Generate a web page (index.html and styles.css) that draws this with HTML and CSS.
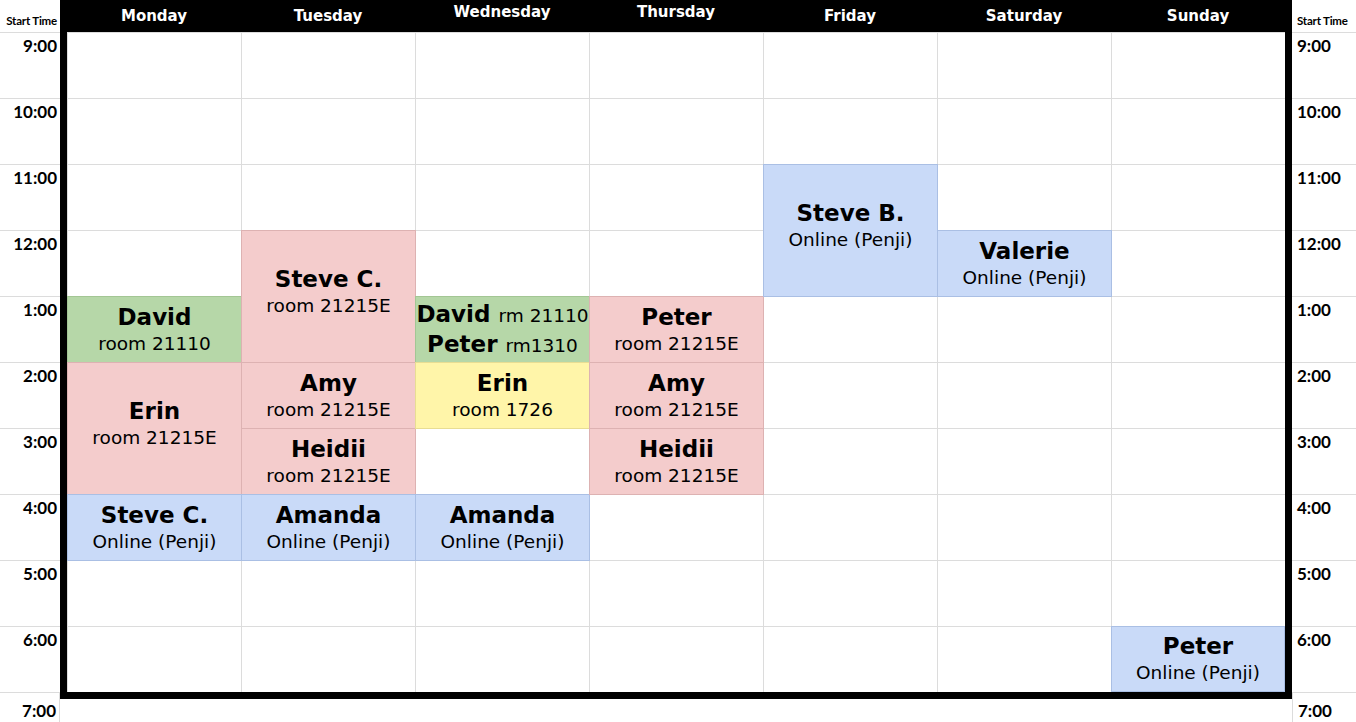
FILE: index.html
```html
<!DOCTYPE html>
<html lang="en">
<head>
    <meta charset="UTF-8">
    <meta name="viewport" content="width=device-width, initial-scale=1.0">
    <title>Tutoring Schedule</title>
    <link rel="stylesheet" href="styles.css">
</head>
<body>
    <div class="sheet">
        <div class="times times-left">
            <div class="time-head">Start Time</div>
            <div class="time">9:00</div>
            <div class="time">10:00</div>
            <div class="time">11:00</div>
            <div class="time">12:00</div>
            <div class="time">1:00</div>
            <div class="time">2:00</div>
            <div class="time">3:00</div>
            <div class="time">4:00</div>
            <div class="time">5:00</div>
            <div class="time">6:00</div>
            <div class="time time-last">7:00</div>
        </div>

        <div class="board">
            <div class="day-head">
                <div class="day">Monday</div>
                <div class="day">Tuesday</div>
                <div class="day day-up">Wednesday</div>
                <div class="day day-up">Thursday</div>
                <div class="day">Friday</div>
                <div class="day">Saturday</div>
                <div class="day">Sunday</div>
            </div>

            <div class="grid">
                <!-- Monday -->
                <div class="block green" style="grid-column: 1; grid-row: 5;">
                    <div class="name">David</div>
                    <div class="place">room 21110</div>
                </div>
                <div class="block pink tall" style="grid-column: 1; grid-row: 6 / span 2;">
                    <div class="name">Erin</div>
                    <div class="place">room 21215E</div>
                </div>
                <div class="block blue" style="grid-column: 1; grid-row: 8;">
                    <div class="name">Steve C.</div>
                    <div class="place">Online (Penji)</div>
                </div>

                <!-- Tuesday -->
                <div class="block pink tall" style="grid-column: 2; grid-row: 4 / span 2;">
                    <div class="name">Steve C.</div>
                    <div class="place">room 21215E</div>
                </div>
                <div class="block pink" style="grid-column: 2; grid-row: 6;">
                    <div class="name">Amy</div>
                    <div class="place">room 21215E</div>
                </div>
                <div class="block pink" style="grid-column: 2; grid-row: 7;">
                    <div class="name">Heidii</div>
                    <div class="place">room 21215E</div>
                </div>
                <div class="block blue" style="grid-column: 2; grid-row: 8;">
                    <div class="name">Amanda</div>
                    <div class="place">Online (Penji)</div>
                </div>

                <!-- Wednesday -->
                <div class="block green" style="grid-column: 3; grid-row: 5;">
                    <div class="name">David <span class="place-inline">rm 21110</span></div>
                    <div class="name">Peter <span class="place-inline">rm1310</span></div>
                </div>
                <div class="block yellow" style="grid-column: 3; grid-row: 6;">
                    <div class="name">Erin</div>
                    <div class="place">room 1726</div>
                </div>
                <div class="block blue" style="grid-column: 3; grid-row: 8;">
                    <div class="name">Amanda</div>
                    <div class="place">Online (Penji)</div>
                </div>

                <!-- Thursday -->
                <div class="block pink" style="grid-column: 4; grid-row: 5;">
                    <div class="name">Peter</div>
                    <div class="place">room 21215E</div>
                </div>
                <div class="block pink" style="grid-column: 4; grid-row: 6;">
                    <div class="name">Amy</div>
                    <div class="place">room 21215E</div>
                </div>
                <div class="block pink" style="grid-column: 4; grid-row: 7;">
                    <div class="name">Heidii</div>
                    <div class="place">room 21215E</div>
                </div>

                <!-- Friday -->
                <div class="block blue tall" style="grid-column: 5; grid-row: 3 / span 2;">
                    <div class="name">Steve B.</div>
                    <div class="place">Online (Penji)</div>
                </div>

                <!-- Saturday -->
                <div class="block blue" style="grid-column: 6; grid-row: 4;">
                    <div class="name">Valerie</div>
                    <div class="place">Online (Penji)</div>
                </div>

                <!-- Sunday -->
                <div class="block blue edge" style="grid-column: 7; grid-row: 10;">
                    <div class="name">Peter</div>
                    <div class="place">Online (Penji)</div>
                </div>
            </div>
        </div>

        <div class="times times-right">
            <div class="time-head">Start Time</div>
            <div class="time">9:00</div>
            <div class="time">10:00</div>
            <div class="time">11:00</div>
            <div class="time">12:00</div>
            <div class="time">1:00</div>
            <div class="time">2:00</div>
            <div class="time">3:00</div>
            <div class="time">4:00</div>
            <div class="time">5:00</div>
            <div class="time">6:00</div>
            <div class="time time-last">7:00</div>
        </div>
    </div>
</body>
</html>
```

FILE: styles.css
```css
* {
    margin: 0;
    padding: 0;
    box-sizing: border-box;
}

body {
    font-family: 'DejaVu Sans', Verdana, sans-serif;
    background: #fff;
    color: #000;
    width: 1356px;
    height: 722px;
    overflow: hidden;
}

.sheet {
    display: grid;
    grid-template-columns: 60px 1232px 64px;
    height: 722px;
}

/* start time columns */
.times {
    display: flex;
    flex-direction: column;
    font-family: 'Lato', 'DejaVu Sans', sans-serif;
    font-weight: 700;
}

.time-head {
    height: 32px;
    font-size: 11.5px;
    padding-top: 14px;
    letter-spacing: -0.2px;
}

.time {
    height: 66px;
    border-top: 1px solid #dcdcdc;
    font-size: 17px;
    padding-top: 2px;
}

.time-last {
    flex: 1;
    padding-top: 7px;
}

.times-left {
    text-align: right;
}

.times-left .time-head,
.times-left .time {
    padding-right: 3px;
}

.times-left .time-last {
    border-right: 1px solid #dcdcdc;
}

.times-right .time-head,
.times-right .time {
    padding-left: 5px;
}

.times-right .time-last {
    border-left: 1px solid #dcdcdc;
}

/* day board */
.board {
    display: flex;
    flex-direction: column;
}

.day-head {
    height: 32px;
    background: #000;
    padding: 0 7px;
    display: grid;
    grid-template-columns: repeat(7, 174px);
}

.day {
    color: #fff;
    font-weight: bold;
    font-size: 15px;
    display: flex;
    align-items: center;
    justify-content: center;
}

.day-up {
    align-items: flex-start;
    padding-top: 3px;
}

.grid {
    display: grid;
    grid-template-columns: repeat(7, 174px);
    grid-template-rows: repeat(10, 66px);
    border: 7px solid #000;
    border-top: 0;
    background-color: #fff;
    background-image:
        linear-gradient(to right, #dcdcdc 1px, transparent 1px),
        linear-gradient(to bottom, #dcdcdc 1px, transparent 1px);
    background-size: 174px 66px;
}

.block {
    display: flex;
    flex-direction: column;
    align-items: center;
    justify-content: center;
    border: 1px solid;
    margin-right: -1px;
    margin-bottom: -1px;
    text-align: center;
    white-space: nowrap;
}

.block.tall {
    padding-bottom: 10px;
}

.block.edge {
    margin: 0;
}

.name {
    font-weight: bold;
    font-size: 23px;
    line-height: 28px;
}

.place {
    font-size: 18.5px;
    line-height: 26px;
}

.place-inline {
    font-weight: normal;
    font-size: 18.5px;
}

.green {
    background: #b6d7a8;
    border-color: #a3c694;
}

.pink {
    background: #f4cccc;
    border-color: #ddb2b2;
}

.blue {
    background: #c9daf8;
    border-color: #aabfe4;
}

.yellow {
    background: #fff5a9;
    border-color: #e8dd93;
}
```
